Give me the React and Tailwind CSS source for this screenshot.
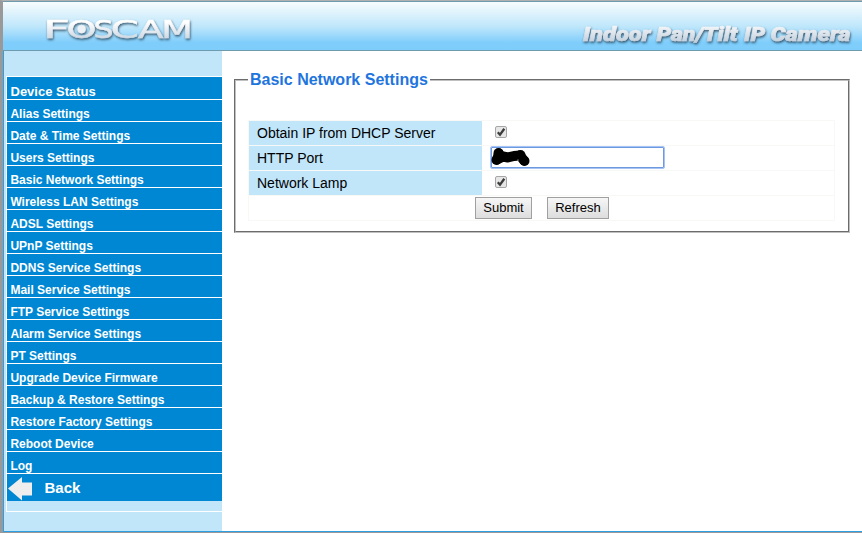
import React from "react";

const items = [
  "Alias Settings",
  "Date & Time Settings",
  "Users Settings",
  "Basic Network Settings",
  "Wireless LAN Settings",
  "ADSL Settings",
  "UPnP Settings",
  "DDNS Service Settings",
  "Mail Service Settings",
  "FTP Service Settings",
  "Alarm Service Settings",
  "PT Settings",
  "Upgrade Device Firmware",
  "Backup & Restore Settings",
  "Restore Factory Settings",
  "Reboot Device",
  "Log",
];

// [text, left edge, drawn width]
const brand = [
  ["F", 43, 27],
  ["O", 66.5, 30],
  ["S", 93.5, 20],
  ["C", 110.8, 28],
  ["A", 138, 25.6],
  ["M", 161.2, 31.5],
];

const title = [
  ["Indoor", 583, 67.5],
  ["Pan/Tilt", 656.5, 81],
  ["IP", 744, 21],
  ["Camera", 770.5, 80],
];

function Header() {
  return (
    <header className="h-[50px] shrink-0 border-y border-[#6f9bae] bg-linear-to-b from-[#f7fcfd] via-[#c0e7fb] via-50% to-[#7ecdfb] to-85%">
      <svg width="859" height="48" viewBox="3 2 859 48" className="block">
        <defs>
          <linearGradient id="silver" gradientUnits="userSpaceOnUse" x1="0" y1="20" x2="0" y2="42">
            <stop offset="0.1" stopColor="#ffffff" />
            <stop offset="1" stopColor="#c3d0dd" />
          </linearGradient>
          <filter id="shade" x="-5%" y="-20%" width="110%" height="160%">
            <feDropShadow dx="0.7" dy="1.5" stdDeviation="1" floodColor="#264a62" floodOpacity="0.95" />
          </filter>
        </defs>
        <g filter="url(#shade)" fill="url(#silver)" stroke="url(#silver)" strokeWidth="0.4" fontFamily="'DejaVu Sans', sans-serif" fontSize="24">
          {brand.map(([text, x, width]) => (
            <text key={text} x={x} y="38" textLength={width} lengthAdjust="spacingAndGlyphs">{text}</text>
          ))}
          <circle cx="81.6" cy="29.2" r="4" fill="#edf2f6" />
        </g>
        <g filter="url(#shade)" fill="url(#silver)" stroke="url(#silver)" strokeWidth="0.6" fontFamily="Roboto, 'Liberation Sans', sans-serif" fontSize="20.5" fontWeight="900" fontStyle="italic">
          {title.map(([text, x, width]) => (
            <text key={text} x={x} y="40.7" textLength={width} lengthAdjust="spacingAndGlyphs">{text}</text>
          ))}
        </g>
      </svg>
    </header>
  );
}

function Sidebar() {
  return (
    <nav className="w-[218px] shrink-0 bg-[#c1e5f9] pt-[25px] pl-[2px] font-bold text-white">
      <div className="h-[436px] border-y border-l border-white">
        <div className="h-[23px] border-b border-white bg-[#0087d4] pl-[3.5px] text-[13px] leading-[29px]">Device Status</div>
        {items.map((item) => (
          <div key={item} className="h-[22px] border-b border-white bg-[#0087d4] pl-[3.4px] text-[12px] leading-[28px] whitespace-nowrap">
            {item}
          </div>
        ))}
        <div className="flex h-[27px] items-center bg-[#0087d4] text-[15px]">
          <svg width="26" height="26" viewBox="0 0 26 26" className="shrink-0">
            <path d="M1 13.5 15 2V7.5H25V20.5H15V25.5Z" fill="#eeeeee" />
          </svg>
          <span className="pl-[11.5px] leading-[27px]">Back</span>
        </div>
      </div>
    </nav>
  );
}

function Check() {
  return (
    <svg width="13" height="13" viewBox="0 0 13 13" className="mb-[2px] ml-[5px]" role="checkbox" aria-checked="true">
      <rect x="0.5" y="0.5" width="11" height="11" rx="1.5" fill="#e6e6e6" stroke="#a6a6a6" />
      <path d="M2.8 6.3 5 8.7 9.3 2.8" fill="none" stroke="#3c3c3c" strokeWidth="2.3" />
    </svg>
  );
}

function Row({ label, children }) {
  return (
    <div className="flex h-[25px] border-b border-[#f8f8f7]">
      <div className="w-[233px] shrink-0 bg-[#c1e5f9] pl-2 text-[14px] leading-[24px]">{label}</div>
      <div className="flex flex-1 items-center pl-[8px]">{children}</div>
    </div>
  );
}

function Button({ width, children }) {
  return (
    <button className={`${width} h-[22px] border border-[#a0a0a0] bg-linear-to-b from-[#f6f6f6] to-[#dddddd] pb-px pl-px text-[13px] leading-[19px]`}>
      {children}
    </button>
  );
}

export default function App() {
  return (
    <div className="flex h-[533px] w-[862px] flex-col overflow-hidden border-t border-b border-l-[3px] border-t-[#b0b0b0] border-b-[#999999] border-l-[#999999] bg-white font-['Liberation_Sans',Arial,sans-serif] text-black">
      <Header />
      <div className="flex min-h-0 flex-1 border-b border-l border-[#2d9fe3]">
        <Sidebar />
        <main className="flex-1 pt-[19px] pr-3 pl-3">
          <fieldset className="h-[163px] w-[616px] border-2 [border-style:groove] border-[#c0c0c0] px-3">
            <legend className="h-[19px] px-[2px] text-[16px] leading-[19px] font-bold text-[#1f75de]">Basic Network Settings</legend>
            <div className="mt-[31px] w-[587px] border-t border-r border-l border-[#f8f8f7]">
              <Row label="Obtain IP from DHCP Server"><Check /></Row>
              <Row label="HTTP Port">
                <div className="mb-[1px] h-[23px] w-[175px] rounded-[2px] border border-[#a5c3f5] bg-white shadow-[inset_0_0_0_1px_#6e98df]">
                  <svg width="44" height="20" viewBox="491 147.5 44 20" className="block">
                    <path d="M499 154 497 160 503 157 508 158 514 156.5 520 156 524 161" fill="none" stroke="black" strokeWidth="10" strokeLinecap="round" strokeLinejoin="round" />
                    <circle cx="498.5" cy="153.5" r="5" />
                    <circle cx="496.5" cy="160.5" r="5" />
                    <circle cx="520.5" cy="155.5" r="5" />
                    <circle cx="524.5" cy="161.5" r="5" />
                    <circle cx="518" cy="160.5" r="0.6" fill="white" />
                  </svg>
                </div>
              </Row>
              <Row label="Network Lamp"><Check /></Row>
              <div className="flex h-[25px] items-center justify-center gap-[15px] border-b border-[#f8f8f7]">
                <Button width="w-[57px]">Submit</Button>
                <Button width="w-[62px]">Refresh</Button>
              </div>
            </div>
          </fieldset>
        </main>
      </div>
    </div>
  );
}
